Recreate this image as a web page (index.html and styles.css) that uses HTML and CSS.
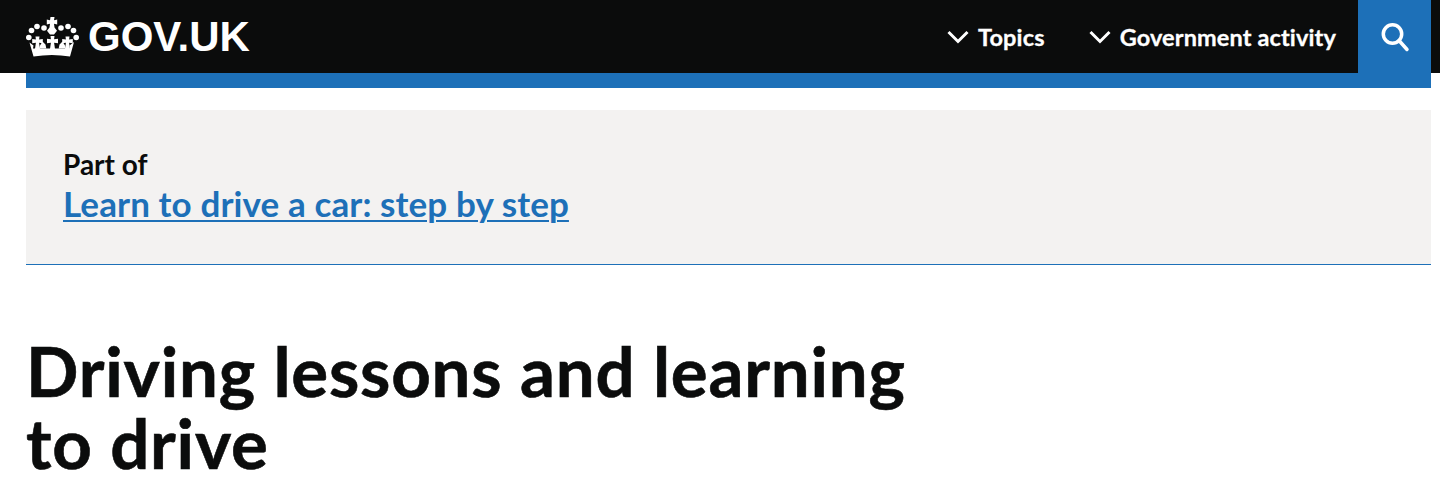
FILE: index.html
```html
<!DOCTYPE html>
<html lang="en">
<head>
  <meta charset="UTF-8" />
  <title>Driving lessons and learning to drive</title>
  <meta name="viewport" content="width=device-width, initial-scale=1" />
  <link rel="stylesheet" href="styles.css">
</head>
<body>
  <header class="header">
    <a class="logo" href="#">
      <svg class="crown" viewBox="0 0 53 40" width="53" height="40" fill="#fff">
        <path d="M24.500 0h4l-.5 3.200 3.200-.7v5l-3.200-.7.500 3.700 2.500 3.200-3 3.800h-4l-3-3.800 2.500-3.200.5-3.700-3.200.7v-5l3.200.7z" />
        <circle cx="18" cy="11" r="2.800" />
        <circle cx="35" cy="11" r="2.800" />
        <circle cx="11" cy="9.500" r="2.800" />
        <circle cx="42" cy="9.500" r="2.800" />
        <circle cx="5.500" cy="13.500" r="2.800" />
        <circle cx="47.500" cy="13.500" r="2.800" />
        <circle cx="2.800" cy="20.500" r="2.800" />
        <circle cx="50.200" cy="20.500" r="2.800" />
        <path d="M24.500 19h4l-.4 3.300 3.900-.6v4.600l-3.900-.6.900 6.300h-5l.9-6.300-3.900.6v-4.600l3.900.6z" />
        <path d="M9.500 19.500h4l-.4 3 3.700-.6v4.400l-3.700-.6.900 6.300h-5l.9-6.300-3.700.6v-4.400l3.700.6z" />
        <path d="M39.500 19.500h4l-.4 3 3.700-.6v4.400l-3.700-.6.900 6.300h-5l.9-6.300-3.700.6v-4.400l3.700.6z" />
        <path d="M3.500 25.500l4 3-.5 3h37l-.5-3 4.500-3.500-4 14.500q-18-3-36.500 0z" />
        <path d="M16.500 24.500l3 3 .8 4h-7l.7-3zM36.500 24.500l-3 3-.8 4h7l-.7-3z" />
      </svg>
      <span>GOV.UK</span>
    </a>
    <nav class="nav">
      <a class="nav-link" href="#">
        <svg class="chevron" viewBox="0 0 22 14" width="22" height="14"><path d="M1.500 2l9.500 9.500L20.500 2" /></svg>
        Topics
      </a>
      <a class="nav-link" href="#">
        <svg class="chevron" viewBox="0 0 22 14" width="22" height="14"><path d="M1.500 2l9.500 9.500L20.500 2" /></svg>
        Government activity
      </a>
    </nav>
    <a class="search" href="#">
      <svg viewBox="0 0 30 30" width="30" height="30"><circle cx="12.500" cy="12" r="9.200" /><path d="M19 18.500l8 9" /></svg>
    </a>
  </header>

  <main class="page">
    <div class="blue-bar"></div>
    <div class="part-of">
      <p>Part of</p>
      <a href="#">Learn to drive a car: step by step</a>
    </div>
    <h1>Driving lessons and learning to drive</h1>
  </main>
</body>
</html>
```

FILE: styles.css
```css
body {
  margin: 0;
  font-family: 'Lato', sans-serif;
  color: #0b0c0c;
  background: white;
  overflow: hidden;
}
.header {
  height: 73px;
  background: #0b0c0c;
  display: flex;
  align-items: center;
  padding-left: 26px;
  padding-right: 9px;
}
.logo {
  display: flex;
  align-items: center;
  gap: 9px;
  color: white;
  font-family: 'Liberation Sans', sans-serif;
  font-weight: bold;
  font-size: 42px;
  text-decoration: none;
}
.nav {
  margin-left: auto;
  display: flex;
  gap: 44px;
  margin-right: 22px;
}
.nav-link {
  display: flex;
  align-items: center;
  gap: 9px;
  color: white;
  font-weight: bold;
  font-size: 23.500px;
  letter-spacing: 0.130px;
  text-decoration: none;
  -webkit-text-stroke: 0.300px white;
}
.chevron path {
  fill: none;
  stroke: white;
  stroke-width: 3;
}
.search {
  width: 73px;
  height: 73px;
  background: #1d70b8;
  display: flex;
  align-items: center;
  justify-content: center;
}
.search circle,
.search path {
  fill: none;
  stroke: white;
  stroke-width: 3.500;
}
.search path {
  stroke-linecap: round;
}
.page {
  margin: 0 9px 0 26px;
}
.blue-bar {
  height: 15px;
  background: #1d70b8;
}
.part-of {
  margin-top: 22px;
  height: 155px;
  box-sizing: border-box;
  padding: 39px 37px 0;
  background: #f3f2f1;
  border-bottom: 1px solid #1d70b8;
}
.part-of p {
  margin: 0;
  font-size: 28px;
  line-height: 30px;
  font-weight: bold;
}
.part-of a {
  color: #1d70b8;
  font-size: 35px;
  letter-spacing: 0.100px;
  line-height: 48px;
  font-weight: bold;
  text-underline-offset: 3px;
  text-decoration-thickness: 2px;
}
h1 {
  margin: 70px 0 0;
  max-width: 900px;
  font-size: 69px;
  letter-spacing: 0.780px;
  line-height: 72px;
  font-weight: bold;
  -webkit-text-stroke: 0.600px #0b0c0c;
}
```
